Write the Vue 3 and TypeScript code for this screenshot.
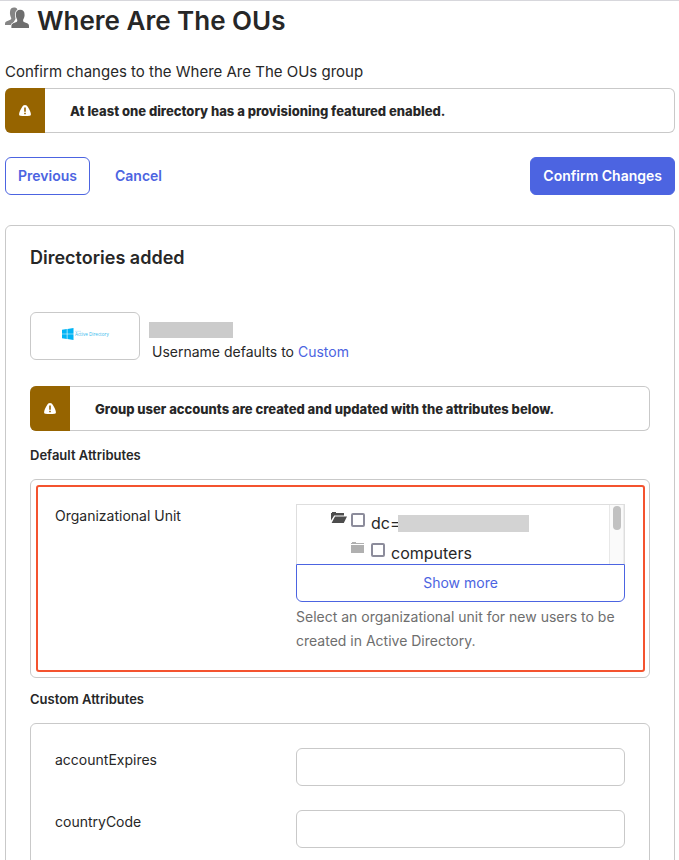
<script setup lang="ts">
import { ref } from 'vue'

interface CustomAttribute {
  name: string
  value: string
}

const groupName = 'Where Are The OUs'
const rootChecked = ref(false)
const computersChecked = ref(false)
const attributes = ref<CustomAttribute[]>([
  { name: 'accountExpires', value: '' },
  { name: 'countryCode', value: '' },
])
</script>

<template>
  <main class="page">
    <header class="title">
      <svg class="group-icon" viewBox="0 0 24 22" aria-hidden="true">
        <path
          fill="#858585"
          d="M9 .5c1.600 0 3 .5 3.400 2L10.500 12 7 18H0v-1.300c.1-1.600 1.300-2.300 3-2.900 1.700-.6 3.300-1 3.300-2.200 0-.9-.7-1.600-1-3.200C4.700 6.700 5 5 5.200 3.600 5.500 1.500 6.900.5 9 .5z"
        />
        <path
          fill="#6e6e6e"
          stroke="#fff"
          stroke-width="1.600"
          paint-order="stroke"
          d="M15.200 2.800c2.900 0 4.400 1.800 4.300 4.500 0 .7.200 1.500-.1 2.300-.3 1.900-1.300 2.700-1.300 3.900 0 1.300 1 1.700 2.700 2.300 2.200.7 3.200 1.500 3.200 3.200v2H6.400v-2c0-1.700 1-2.500 3.200-3.200 1.700-.6 2.700-1 2.700-2.300 0-1.200-1-2-1.300-3.900-.3-.8-.1-1.600-.1-2.300-.1-2.700 1.400-4.500 4.300-4.500z"
        />
      </svg>
      <h1>{{ groupName }}</h1>
    </header>
    <p class="intro">Confirm changes to the {{ groupName }} group</p>

    <div class="alert">
      <span class="alert-mark">
        <svg viewBox="0 0 12 11" aria-hidden="true">
          <path fill="#fff" d="M6 0c1.500 0 2.200.9 2.900 2.100C10.300 4.500 11.600 6.700 11.900 9c.1 1.200-.6 1.700-1.700 1.800-2.800.3-5.600.3-8.400 0C.7 10.700 0 10.200.1 9c.3-2.300 1.600-4.500 3-6.900C3.800.9 4.500 0 6 0z" />
          <path fill="#966400" d="M5.200 2.500h1.600v4.300H5.200zM5.200 7.700h1.600v1.500H5.200z" />
        </svg>
      </span>
      <p>At least one directory has a provisioning featured enabled.</p>
    </div>

    <div class="actions">
      <button type="button" class="btn outline">Previous</button>
      <a href="#" class="cancel">Cancel</a>
      <button type="button" class="btn primary">Confirm Changes</button>
    </div>

    <section class="card">
      <h2>Directories added</h2>

      <div class="directory">
        <div class="logo">
          <svg viewBox="0 0 48 12" role="img">
            <path fill="#00b4f5" d="M0 1.700 4.800 1v4.700H0zM5.400.9 11.500 0v5.700H5.400zM0 6.300h4.800V11L0 10.300zM5.400 6.300h6.100V12l-6.100-.9z" />
            <path stroke="#a5def7" stroke-width=".6" d="M13 3.300h6" />
            <text x="13" y="8" font-size="4.600" fill="#35b9ed" font-family="Open Sans, sans-serif">Active Directory</text>
          </svg>
        </div>
        <div class="directory-text">
          <span class="redacted name"></span>
          <p>Username defaults to <a href="#">Custom</a></p>
        </div>
      </div>

      <div class="alert">
        <span class="alert-mark">
          <svg viewBox="0 0 12 11" aria-hidden="true">
            <path fill="#fff" d="M6 0c1.500 0 2.200.9 2.900 2.100C10.300 4.500 11.600 6.700 11.900 9c.1 1.200-.6 1.700-1.700 1.800-2.800.3-5.600.3-8.400 0C.7 10.700 0 10.200.1 9c.3-2.300 1.600-4.500 3-6.900C3.800.9 4.500 0 6 0z" />
            <path fill="#966400" d="M5.200 2.500h1.600v4.300H5.200zM5.200 7.700h1.600v1.500H5.200z" />
          </svg>
        </span>
        <p>Group user accounts are created and updated with the attributes below.</p>
      </div>

      <h3>Default Attributes</h3>
      <div class="panel highlighted">
        <div class="field">
          <span class="label">Organizational Unit</span>
          <div>
            <div class="tree">
              <div class="nodes">
                <label class="node">
                  <svg class="folder" viewBox="0 0 16 12" aria-hidden="true">
                    <path fill="#4d4d4d" d="M0 1h1V0h4v1h8v2.500H3.200L0 8.500zM4 4.500h12L12.800 11H.6z" />
                  </svg>
                  <input v-model="rootChecked" type="checkbox" />
                  <span>dc=</span><span class="redacted domain"></span>
                </label>
                <label class="node child">
                  <svg class="folder" viewBox="0 0 16 12" aria-hidden="true">
                    <path fill="#b0b0b0" d="M0 1h1V0h4v1h8v1H0zM0 3h13v8H0z" />
                  </svg>
                  <input v-model="computersChecked" type="checkbox" />
                  <span>computers</span>
                </label>
              </div>
              <div class="track"><div class="thumb"></div></div>
            </div>
            <button type="button" class="more">Show more</button>
            <p class="hint">Select an organizational unit for new users to be created in Active Directory.</p>
          </div>
        </div>
      </div>

      <h3>Custom Attributes</h3>
      <div class="panel custom">
        <div v-for="attribute in attributes" :key="attribute.name" class="field">
          <label class="label" :for="attribute.name">{{ attribute.name }}</label>
          <input :id="attribute.name" v-model="attribute.value" class="text" type="text" />
        </div>
      </div>
    </section>
  </main>
</template>

<style>
body {
  background: #fff;
}
</style>

<style scoped>
* {
  box-sizing: border-box;
}
.page {
  height: 100vh;
  overflow: hidden;
  padding: 0 4px 0 5px;
  border-top: 1px solid #d7d7dc;
  font: 14px/24px Inter, "Liberation Sans", sans-serif;
  color: #272727;
}
h1, h2, h3, p {
  margin: 0;
}
a {
  color: #4c64e1;
  text-decoration: none;
}
.title {
  display: flex;
  align-items: flex-start;
  gap: 8px;
  height: 56px;
}
.group-icon {
  flex: none;
  width: 24px;
  height: 22px;
  margin-top: 6px;
}
h1 {
  font-size: 26px;
  font-weight: 600;
  line-height: 40px;
}
.intro {
  height: 31px;
  font-size: 15px;
  line-height: 29px;
}
.alert {
  display: flex;
  align-items: center;
  height: 45px;
  border: 1px solid #c9c9c9;
  border-left: 0;
  border-radius: 6px;
}
.alert-mark {
  flex: none;
  display: flex;
  align-items: center;
  justify-content: center;
  width: 40px;
  height: 45px;
  border-radius: 6px 0 0 6px;
  background: #966400;
}
.alert-mark svg {
  width: 12px;
  height: 11px;
}
.alert p {
  margin-left: 25px;
  font-size: 13px;
  font-weight: 800;
}
.actions {
  display: flex;
  align-items: center;
  margin: 24px 0 30px;
}
.btn {
  height: 38px;
  padding: 0 12px;
  border: 1px solid #4c64e1;
  border-radius: 6px;
  font: 600 14px/24px Inter, sans-serif;
}
.outline {
  background: #fff;
  color: #4c64e1;
}
.primary {
  margin-left: auto;
  background: #4c64e1;
  color: #fff;
}
.cancel {
  margin-left: 25px;
  font-weight: 600;
}
.card {
  padding: 20px 24px 24px;
  border: 1px solid #c9c9c9;
  border-radius: 6px;
}
h2 {
  font-size: 18px;
  font-weight: 600;
  line-height: 24px;
}
.directory {
  display: flex;
  align-items: flex-start;
  gap: 9px;
  height: 48px;
  margin: 42px 0 26px;
}
.logo {
  display: flex;
  align-items: center;
  justify-content: center;
  width: 110px;
  height: 48px;
  padding: 0 0 4px 2px;
  border: 1px solid #c9c9c9;
  border-radius: 6px;
}
.logo svg {
  width: 48px;
  height: 12px;
}
.directory-text {
  padding-top: 10px;
}
.directory-text p {
  margin: 2px 0 0 3px;
}
.redacted {
  display: block;
  background: #cbcbcb;
}
.name {
  width: 84px;
  height: 16px;
}
h3 {
  padding: 12px 0;
  font-size: 13px;
  font-weight: 600;
  line-height: 24px;
}
.panel + h3 {
  padding-top: 9px;
}
.panel {
  padding: 24px;
  border: 1px solid #c9c9c9;
  border-radius: 6px;
}
.highlighted {
  position: relative;
}
.highlighted::after {
  content: "";
  position: absolute;
  inset: 5px 4px 5px 5px;
  border: 2px solid #f4532f;
  border-radius: 3px;
  pointer-events: none;
}
.custom {
  display: grid;
  gap: 24px;
}
.field {
  display: grid;
  grid-template-columns: 241px minmax(0, 1fr);
}
.tree {
  display: flex;
  height: 60px;
  overflow: hidden;
  border: 1px solid #dedede;
  border-bottom: 0;
}
.nodes {
  flex: 1;
  padding: 3px 0 0 34px;
}
.node {
  display: flex;
  align-items: center;
  height: 30px;
  font-size: 16px;
}
.child {
  padding-left: 20px;
}
.folder {
  width: 16px;
  height: 12px;
  margin-bottom: 10px;
}
.node input {
  appearance: none;
  width: 14px;
  height: 14px;
  margin: 0 6px 6px 4px;
  border: 2px solid #8c8c9b;
  border-radius: 2px;
  background: #fff;
}
.domain {
  width: 131px;
  height: 17px;
  margin-left: -3px;
  background: #d3d3d3;
}
.track {
  width: 15px;
  padding: 1px 3px;
  border-left: 1px solid #e8e8e8;
  border-right: 1px solid #ededed;
  background: #fafafa;
}
.thumb {
  width: 8px;
  height: 24px;
  border-radius: 4px;
  background: #c1c1c1;
}
.more {
  display: block;
  width: 100%;
  height: 38px;
  border: 1px solid #4c64e1;
  border-radius: 0 0 6px 6px;
  background: #fff;
  color: #4c64e1;
  font: 14px/24px Inter, sans-serif;
}
.hint {
  margin-top: 3px;
  color: #6e6e6e;
}
.text {
  width: 100%;
  height: 38px;
  padding: 0 12px;
  border: 1px solid #c9c9c9;
  border-radius: 6px;
  font: 14px/24px Inter, sans-serif;
}
</style>
